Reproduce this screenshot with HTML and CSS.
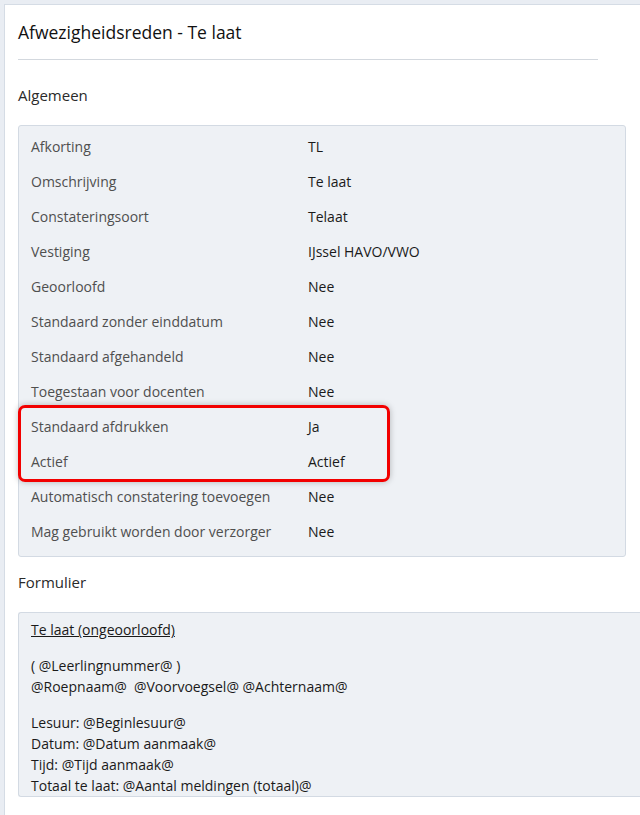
FILE: index.html
```html
<!DOCTYPE html>
<html lang="nl">
<head>
    <meta charset="UTF-8">
    <meta name="viewport" content="width=device-width, initial-scale=1.0">
    <title>Afwezigheidsreden - Te laat</title>
    <link rel="stylesheet" href="styles.css">
</head>
<body>

    <div class="frame">
        <div class="page">
            <h1 class="title">Afwezigheidsreden - Te laat</h1>

            <h2 class="section-title">Algemeen</h2>
            <div class="panel">
                <div class="row"><span class="label">Afkorting</span><span class="value">TL</span></div>
                <div class="row"><span class="label">Omschrijving</span><span class="value">Te laat</span></div>
                <div class="row"><span class="label">Constateringsoort</span><span class="value">Telaat</span></div>
                <div class="row"><span class="label">Vestiging</span><span class="value">IJssel HAVO/VWO</span></div>
                <div class="row"><span class="label">Geoorloofd</span><span class="value">Nee</span></div>
                <div class="row"><span class="label">Standaard zonder einddatum</span><span class="value">Nee</span></div>
                <div class="row"><span class="label">Standaard afgehandeld</span><span class="value">Nee</span></div>
                <div class="row"><span class="label">Toegestaan voor docenten</span><span class="value">Nee</span></div>
                <div class="highlight">
                    <div class="row"><span class="label">Standaard afdrukken</span><span class="value">Ja</span></div>
                    <div class="row"><span class="label">Actief</span><span class="value">Actief</span></div>
                </div>
                <div class="row"><span class="label">Automatisch constatering toevoegen</span><span class="value">Nee</span></div>
                <div class="row"><span class="label">Mag gebruikt worden door verzorger</span><span class="value">Nee</span></div>
            </div>

            <h2 class="section-title form-title">Formulier</h2>
            <div class="panel form-panel">
                <p><u>Te laat (ongeoorloofd)</u></p>
                <p class="blank"></p>
                <p>( @Leerlingnummer@ )</p>
                <p>@Roepnaam@&nbsp; @Voorvoegsel@ @Achternaam@</p>
                <p class="blank"></p>
                <p>Lesuur: @Beginlesuur@</p>
                <p>Datum: @Datum aanmaak@</p>
                <p>Tijd: @Tijd aanmaak@</p>
                <p>Totaal te laat: @Aantal meldingen (totaal)@</p>
            </div>
        </div>
    </div>

</body>
</html>
```

FILE: styles.css
```css
* {
    margin: 0px;
    padding: 0px;
    box-sizing: border-box;
}

body {
    font-family: 'Open Sans', 'Liberation Sans', sans-serif;
    background: #fff;
    color: #222;
    overflow: hidden;
}

.frame {
    min-height: 815px;
    border-left: 4px solid #e9edf3;
    border-top: 4px solid #e9edf3;
}

.page {
    min-height: 811px;
    border-left: 1px solid #d5dce5;
    border-top: 1px solid #d5dce5;
    padding: 0 0 0 13px;
}

.title {
    font-size: 17.5px;
    font-weight: 400;
    color: #111;
    width: 580px;
    padding: 16px 0 15px;
    border-bottom: 1px solid #d3d8de;
    line-height: 23px;
}

.section-title {
    font-size: 15px;
    font-weight: 400;
    color: #2a2a2a;
    line-height: 20px;
    margin: 25px 0 20px;
}

.form-title {
    margin: 15px 0 20px;
}

.panel {
    background: #eef1f5;
    border: 1px solid #d3dae3;
    border-radius: 3px;
    width: 608px;
    padding: 3px 0 7px;
}

.row {
    display: flex;
    height: 35px;
    align-items: center;
    font-size: 14px;
    padding-left: 12px;
}

.label {
    width: 277px;
    color: #4f4f4f;
}

.value {
    color: #1a1a1a;
}

.highlight {
    position: relative;
}

.highlight::after {
    content: "";
    position: absolute;
    top: -4px;
    bottom: -3px;
    left: -1px;
    width: 366px;
    border: 3px solid #f20000;
    border-radius: 7px;
    box-shadow: 0 0 6px rgba(0, 0, 0, 0.25);
}

.form-panel {
    width: 640px;
    border-right: none;
    padding: 6px 12px 0;
    font-size: 14px;
    line-height: 21px;
    color: #1a1a1a;
}

.form-panel .blank {
    height: 15px;
}
```
